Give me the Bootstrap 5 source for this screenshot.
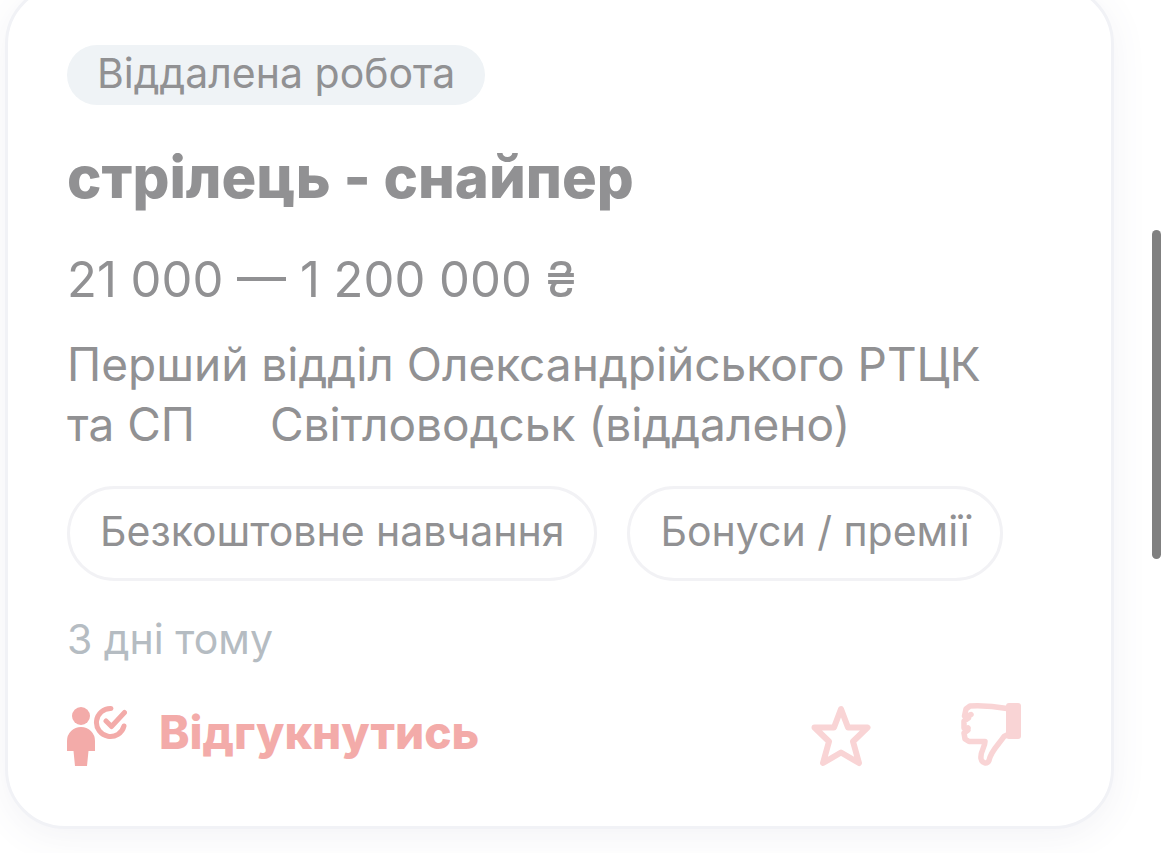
<!DOCTYPE html>
<html lang="uk">
<head>
<meta charset="utf-8">
<meta name="viewport" content="width=device-width, initial-scale=1">
<title>стрілець - снайпер</title>
<link href="https://cdn.jsdelivr.net/npm/bootstrap@5.3.0/dist/css/bootstrap.min.css" rel="stylesheet">
<style>
  body { font-family: Inter, "Noto Sans", sans-serif; color: #919193; background: #fff; overflow: hidden; }
  .vacancy { margin: -16px 56px 24px 5px; padding: 58px 59px; border: 3px solid #f1f2f6; border-radius: 60px; box-shadow: 0 8px 36px rgba(80, 90, 130, .07); }
  .remote { background: #eff3f6; font-size: 41px; line-height: 56px; padding: 0 30px 4px; }
  .vacancy-title { font-size: 58px; line-height: 72px; font-weight: 800; margin: 36px 0 0; }
  .pay { font-size: 49px; line-height: 60px; margin: 37px 0 0; }
  .company { font-size: 46px; line-height: 60px; margin: 24px 0 0; padding-right: 32px; }
  .place { margin-left: 62px; }
  .perks { gap: 30px; margin-top: 32px; }
  .perk { border: 3px solid #f2f2f5; font-size: 41px; line-height: 60px; padding: 12px 30px 17px; }
  .posted { font-size: 41px; line-height: 60px; color: #b5bcc2; margin: 28px 0 0; }
  .actions { margin-top: 31px; padding-right: 31px; }
  .actions svg { width: 60px; height: 68px; display: block; }
  .respond { color: #f3aba9; font-size: 46px; line-height: 64px; font-weight: 800; gap: 32px; }
  .respond span { padding-bottom: 4px; }
  .tools { gap: 90px; color: #f9d4d5; }
  .tools button { color: inherit; }
  .thumb { right: 9px; top: 230px; width: 9px; height: 329px; background: #808080; }
</style>
</head>
<body>
<main>
  <article class="vacancy bg-white">
    <div class="d-flex"><span class="remote rounded-pill">Віддалена робота</span></div>
    <h1 class="vacancy-title">стрілець - снайпер</h1>
    <p class="pay">21 000 — 1 200 000 ₴</p>
    <p class="company">Перший відділ Олександрійського РТЦК та СП <span class="place">Світловодськ (віддалено)</span></p>
    <ul class="perks list-unstyled d-flex flex-wrap mb-0">
      <li class="perk rounded-pill">Безкоштовне навчання</li>
      <li class="perk rounded-pill">Бонуси / премії</li>
    </ul>
    <p class="posted">3 дні тому</p>
    <div class="actions d-flex align-items-center justify-content-between">
      <button type="button" class="respond btn border-0 p-0 d-flex align-items-center">
        <svg viewBox="0 0 60 68" fill="currentColor" aria-hidden="true">
          <circle cx="14" cy="16" r="9"/>
          <path d="M0 51V41a14 14 0 0 1 28 0v10h-6.500l-1.500 15H8L6.500 51z"/>
          <path d="M44 8.500A14 14 0 1 0 57 26M39 21l5.500 5.500L57.500 12.500" fill="none" stroke="currentColor" stroke-width="5" stroke-linecap="round" stroke-linejoin="round"/>
        </svg>
        <span>Відгукнутись</span>
      </button>
      <div class="tools d-flex">
        <button type="button" class="btn border-0 p-0" aria-label="Зберегти">
          <svg viewBox="0 0 60 68" fill="none" stroke="currentColor" stroke-width="6" stroke-linejoin="round" aria-hidden="true"><path d="M30 9l-7 18.500H3.500l14.500 14L12 63l18-10.500L48 63l-6-21.500 14.500-14H37z"/></svg>
        </button>
        <button type="button" class="btn border-0 p-0" aria-label="Не цікавить">
          <svg viewBox="0 0 60 68" fill="none" stroke="currentColor" stroke-width="5.500" stroke-linejoin="round" stroke-linecap="round" aria-hidden="true">
            <rect x="45" y="3" width="15" height="36" rx="3" fill="currentColor" stroke="none"/>
            <path d="M46 8.500C32 6 19 5.500 9 6L5 9l-1.500 7 4 2-4.500 3v7l4 2-4 3 1 6 4 2.500H24c0 6-5 10-4 17 1 5 6 6 8 2 2-10 9-15 15-24l3-1.500M7 16l3-1.500M5 30l2-2"/>
          </svg>
        </button>
      </div>
    </div>
  </article>
</main>
<div class="thumb position-fixed rounded-pill" aria-hidden="true"></div>
<script src="https://cdn.jsdelivr.net/npm/bootstrap@5.3.0/dist/js/bootstrap.bundle.min.js"></script>
</body>
</html>
